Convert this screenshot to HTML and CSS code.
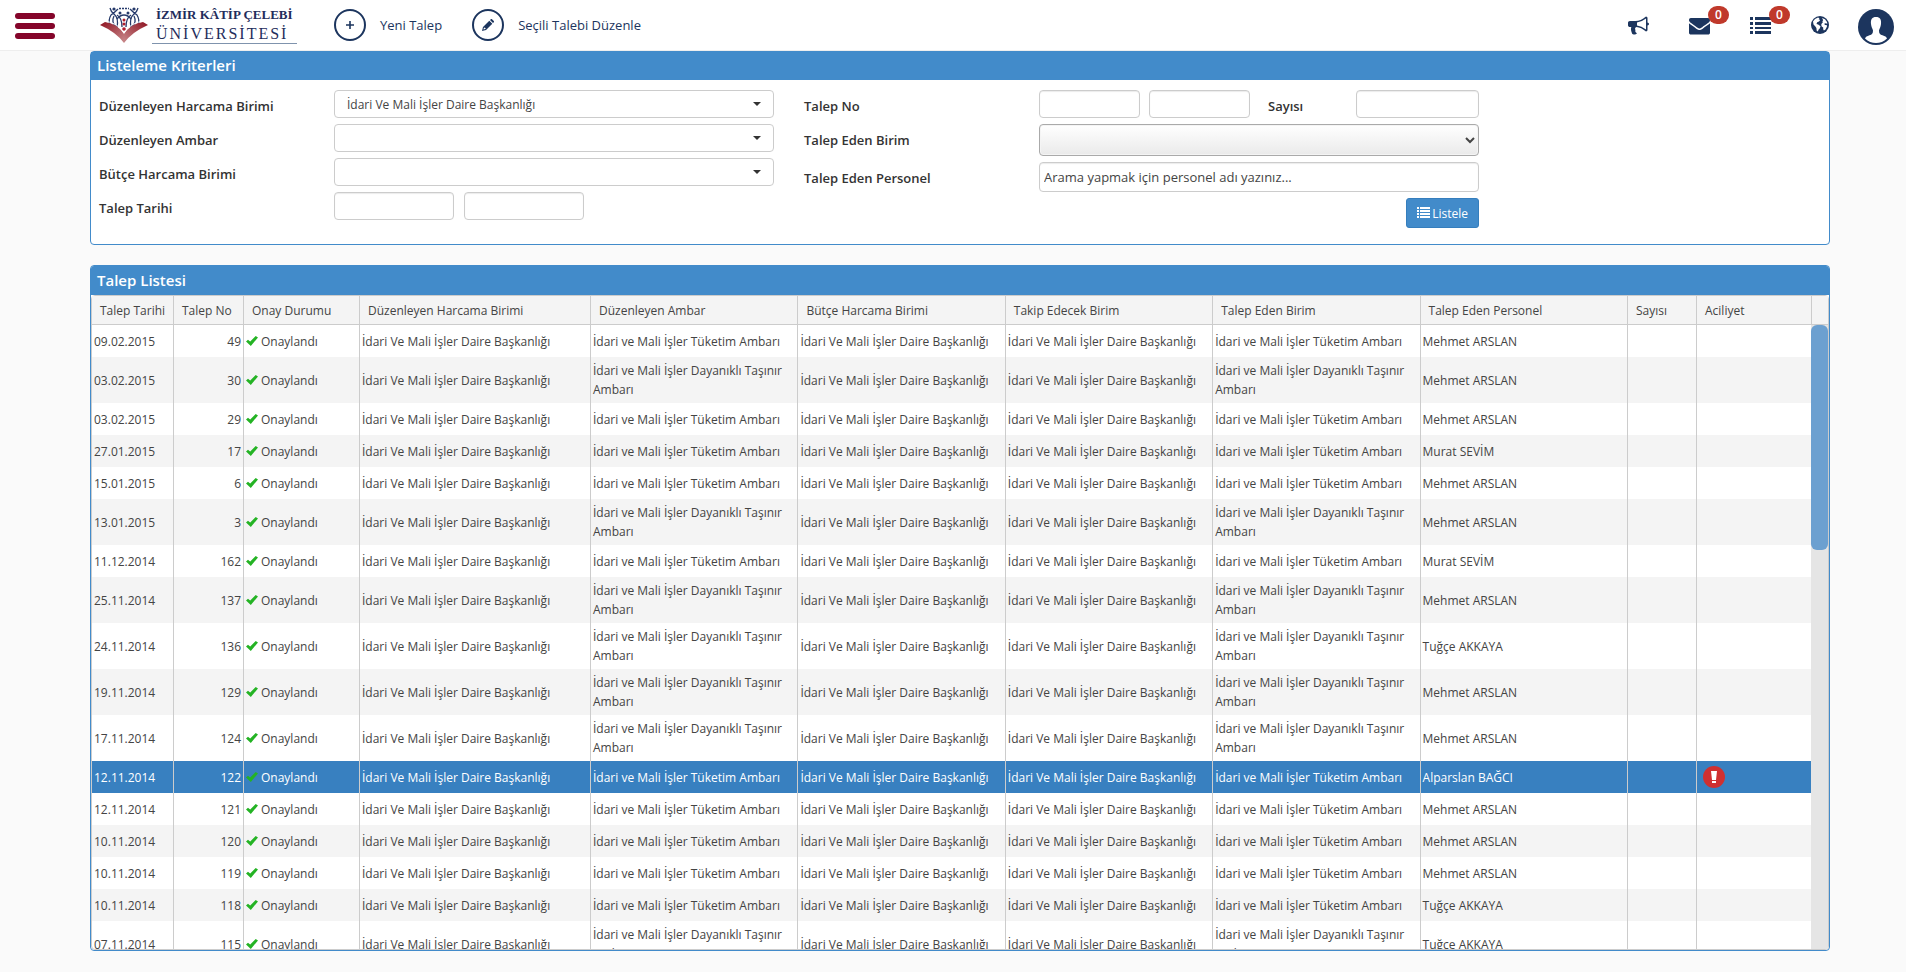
FILE: index.html
```html
<!DOCTYPE html>
<html lang="tr">

<head>
    <meta charset="UTF-8">
    <title>Talep Listesi</title>
    <link rel="stylesheet" href="styles.css">
</head>

<body>
    <header class="topbar">
        <button class="menu-btn" type="button" aria-label="Menü"><span></span><span></span><span></span></button>
        <a class="logo" href="#">
            <svg class="logo-mark" viewBox="0 0 48 38">
                <defs>
                    <linearGradient id="page" x1="0" y1="0" x2="1" y2="1">
                        <stop offset="0" stop-color="#8e1220" />
                        <stop offset="1" stop-color="#c98a8c" />
                    </linearGradient>
                    <linearGradient id="page2" x1="1" y1="0" x2="0" y2="1">
                        <stop offset="0" stop-color="#8e1220" />
                        <stop offset="1" stop-color="#c98a8c" />
                    </linearGradient>
                </defs>
                <g fill="none" stroke="#263a6b" stroke-width="1.3">
                    <path d="M10 2q1 4 4 6q5 4 3 14M18 3q-4 4-7 6q-3 5-1 10M38 2q-1 4-4 6q-5 4-3 14M30 3q4 4 7 6q3 5 1 10" />
                    <path d="M17 9q5 3 5 12M31 9q-5 3-5 12M14 10q-3 6 2 11M34 10q3 6-2 11M17 13q3-4 7-4t7 4" />
                    <path d="M19 2.500h10" stroke-dasharray="2 1" />
                </g>
                <g fill="#263a6b">
                    <circle cx="14" cy="3" r="1.600" />
                    <circle cx="34" cy="3" r="1.600" />
                    <circle cx="20" cy="7" r="1.500" />
                    <circle cx="28" cy="7" r="1.500" />
                </g>
                <g fill="#b01e2d">
                    <circle cx="24" cy="14" r="1.500" />
                    <circle cx="24" cy="18" r="1.500" />
                    <circle cx="24" cy="23" r="1.800" />
                </g>
                <path d="M0 19l5-3q13 2 19 12v9q-8-11-24-18z" fill="url(#page)" />
                <path d="M48 19l-5-3q-13 2-19 12v9q8-11 24-18z" fill="url(#page2)" />
                <path d="M5 15q13 2 19 12q6-10 19-12" fill="none" stroke="#fff" />
            </svg>
            <span class="logo-text">
                <span class="logo-top">İZMİR KÂTİP ÇELEBİ</span>
                <span class="logo-bottom">ÜNİVERSİTESİ</span>
            </span>
        </a>
        <nav class="actions">
            <a href="#"><span class="circle"><svg viewBox="0 0 10 10" width="8" height="8"><path d="M4 0h2v4h4v2H6v4H4V6H0V4h4z" /></svg></span>Yeni Talep</a>
            <a href="#"><span class="circle"><svg viewBox="0 0 12 12" width="12" height="12"><path d="M8 1l3 3 .8-.8q.5-.6 0-1.200L10 .2q-.6-.5-1.200 0zM7.300 1.700l3 3L4 11 0 12l1-4zM2 8.500l-.6 2.100 2-.5.2-1.100-1-.2z" fill-rule="evenodd" /></svg></span>Seçili Talebi Düzenle</a>
        </nav>
        <nav class="tools">
            <a href="#" aria-label="Duyurular"><svg viewBox="0 0 1792 1792" width="21" height="21"><path d="M1664 640q53 0 90.500 37.500t37.500 90.500-37.500 90.500-90.500 37.500v384q0 52-38 90t-90 38q-417-347-812-380-58 19-91 66t-31 100.500 40 92.500q-20 33-23 65.500t6 58 33.500 55 48 50 61.500 50.500q-29 58-111.500 83t-168.500 11.500-132-55.500q-7-23-29.500-87.500t-32-94.500-23-89-15-101 3.500-98.500 22-110.500h-122q-66 0-113-47t-47-113v-192q0-66 47-113t113-47h480q435 0 896-384 52 0 90 38t38 90v384zm-128 604v-954q-394 302-768 343v270q377 42 768 341z" /></svg></a>
            <a href="#" aria-label="Mesajlar"><svg viewBox="0 0 1792 1792" width="21" height="21"><path d="M1792 710v794q0 66-47 113t-113 47h-1472q-66 0-113-47t-47-113v-794q44 49 101 87 362 246 497 345 57 42 92.500 65.500t94.500 48 110 24.500h2q51 0 110-24.500t94.500-48 92.500-65.500q170-123 498-345 57-39 100-87zm0-294q0 79-49 151t-122 123q-376 261-468 325-10 7-42.500 31t-54 38.500-52 32.500-57.500 27-50 9h-2q-23 0-50-9t-57.500-27-52-32.500-54-38.500-42.500-31q-91-64-262-182.500t-205-142.500q-62-42-117-115.500t-55-136.500q0-78 41.500-130t118.500-52h1472q65 0 112.500 47t47.500 113z" /></svg><span class="badge">0</span></a>
            <a href="#" aria-label="Görevler"><svg viewBox="0 0 21 21" width="21" height="21"><path d="M0 2h3v3H0zM5 2h16v3H5zM0 7h3v3H0zM5 7h16v3H5zM0 12h3v2H0zM5 12h16v2H5zM0 16h3v3H0zM5 16h16v3H5z" /></svg><span class="badge">0</span></a>
            <a href="#" aria-label="Dil"><svg viewBox="0 0 18 18" width="18" height="18"><circle cx="9" cy="9" r="9" /><path d="M2 5.500L4 3l3-1.500 1.500.7-.8 1 1.500.8-1.200 1.500-1.800.7L5.500 8l1.700.6 2.300 1.700-.6 2-1.400 1.500-.6 1.700-1.200-.8-.3-2.700L4 10 2.500 8.500z" fill="#fff" /><path d="M11 2l3 1.200L16 6l.3 1.800-1.500-.6-1.600.5.8 1.300h1.700l.3 1.500-1.500 3-1.600 1-.7-1.300v-1.800l-1.500-.9-.5-1.700.8-1.800 1-.8-.7-1 .9-1z" fill="#fff" /></svg></a>
            <a class="avatar" href="#" aria-label="Hesap"><svg viewBox="0 0 36 36" width="36" height="36"><circle cx="18" cy="18" r="18" /><path d="M18 8c4 0 5.500 2.500 5 7-.3 3-1.500 4.500-2 6.500 0 3 1 4 3.500 4.800 2.500.8 4 1.700 4.500 3.200-3 3-7 4.500-11 4.500S10 32.500 7 29.500c.5-1.500 2-2.400 4.500-3.200 2.500-.8 3.500-1.800 3.500-4.800-.5-2-1.700-3.500-2-6.500-.5-4.500 1-7 5-7z" fill="#fff" /></svg></a>
        </nav>
    </header>

    <main class="content">
        <section class="panel">
            <h2 class="panel-title">Listeleme Kriterleri</h2>
            <form class="criteria">
                <div class="criteria-col">
                    <div class="field">
                        <label for="harcamaBirimi">Düzenleyen Harcama Birimi</label>
                        <select id="harcamaBirimi" class="combo">
                            <option>İdari Ve Mali İşler Daire Başkanlığı</option>
                        </select>
                    </div>
                    <div class="field">
                        <label for="ambar">Düzenleyen Ambar</label>
                        <select id="ambar" class="combo"></select>
                    </div>
                    <div class="field">
                        <label for="butceBirimi">Bütçe Harcama Birimi</label>
                        <select id="butceBirimi" class="combo"></select>
                    </div>
                    <div class="field">
                        <label for="tarih1">Talep Tarihi</label>
                        <div class="pair dates">
                            <input type="text" id="tarih1">
                            <input type="text" aria-label="Talep Tarihi bitiş">
                        </div>
                    </div>
                </div>
                <div class="criteria-col">
                    <div class="field">
                        <label for="talepNo1">Talep No</label>
                        <div class="pair numbers">
                            <input type="text" id="talepNo1">
                            <input type="text" aria-label="Talep No bitiş">
                            <label for="sayisi">Sayısı</label>
                            <input type="text" id="sayisi">
                        </div>
                    </div>
                    <div class="field">
                        <label for="edenBirim">Talep Eden Birim</label>
                        <select id="edenBirim" class="native"></select>
                    </div>
                    <div class="field">
                        <label for="personel">Talep Eden Personel</label>
                        <input type="text" id="personel" class="search" placeholder="Arama yapmak için personel adı yazınız...">
                    </div>
                    <button class="list-btn" type="button"><svg viewBox="0 0 13 12" width="13" height="12"><path d="M0 0h2v2H0zM3 0h10v2H3zM0 3h2v2H0zM3 3h10v2H3zM0 6h2v2H0zM3 6h10v2H3zM0 9h2v2H0zM3 9h10v2H3z" /></svg>Listele</button>
                </div>
            </form>
        </section>

        <section class="panel list-panel">
            <h2 class="panel-title">Talep Listesi</h2>
            <div class="grid">
                <div class="grid-view">
                    <table>
                        <colgroup>
                            <col class="c-date">
                            <col class="c-no">
                            <col class="c-status">
                            <col class="c-unit">
                            <col span="5">
                            <col class="c-count">
                            <col class="c-urgent">
                        </colgroup>
                        <thead>
                            <tr>
                                <th>Talep Tarihi</th>
                                <th>Talep No</th>
                                <th>Onay Durumu</th>
                                <th>Düzenleyen Harcama Birimi</th>
                                <th>Düzenleyen Ambar</th>
                                <th>Bütçe Harcama Birimi</th>
                                <th>Takip Edecek Birim</th>
                                <th>Talep Eden Birim</th>
                                <th>Talep Eden Personel</th>
                                <th>Sayısı</th>
                                <th>Aciliyet</th>
                            </tr>
                        </thead>
                        <tbody id="rows"></tbody>
                    </table>
                </div>
                <div class="grid-scroll">
                    <div class="scroll-head"></div>
                    <div class="scroll-track"><div class="scroll-thumb"></div></div>
                </div>
            </div>
        </section>
    </main>

    <script src="app.js"></script>
</body>

</html>
```
FILE: styles.css
```css
* {
    box-sizing: border-box;
}

body {
    margin: 0;
    height: 100vh;
    display: flex;
    flex-direction: column;
    font-family: 'Open Sans', sans-serif;
    font-size: 12px;
    color: #444;
    background-color: #fafafa;
    overflow: hidden;
}

a {
    color: #1c355e;
    text-decoration: none;
}

svg {
    display: block;
    fill: currentColor;
}

/* top bar */
.topbar {
    display: flex;
    align-items: center;
    height: 51px;
    flex-shrink: 0;
    padding: 0 12px 0 15px;
    background-color: #fff;
    border-bottom: 1px solid #eee;
}

.menu-btn {
    display: flex;
    flex-direction: column;
    gap: 4px;
    width: 40px;
    padding: 2px 0 0;
    border: none;
    background: none;
    cursor: pointer;
}

.menu-btn span {
    height: 6px;
    border-radius: 3px;
    background-color: #84052a;
}

.logo {
    display: flex;
    width: 197px;
    margin-left: 45px;
    color: #1f2d5c;
    font-family: 'Liberation Serif', serif;
}

.logo-mark {
    flex-shrink: 0;
    width: 48px;
    height: 38px;
}

.logo-text {
    display: flex;
    flex-direction: column;
    flex: 1;
    margin-left: 4px;
    padding-left: 4px;
    border-bottom: 1px solid #7f93ad;
    white-space: nowrap;
}

.logo-top {
    font-size: 13px;
    font-weight: bold;
    line-height: 18px;
}

.logo-bottom {
    font-size: 16px;
    line-height: 19px;
    letter-spacing: 2px;
}

.actions {
    display: flex;
    gap: 30px;
    margin-left: 37px;
    font-size: 13px;
}

.actions a {
    display: flex;
    align-items: center;
    gap: 14px;
}

.circle {
    display: flex;
    align-items: center;
    justify-content: center;
    width: 32px;
    height: 32px;
    border: 2px solid #1c355e;
    border-radius: 50%;
}

.tools {
    display: flex;
    align-items: center;
    gap: 40px;
    margin-left: auto;
}

.tools a {
    position: relative;
}

.tools .avatar {
    margin-left: -11px;
    padding-top: 4px;
}

.badge {
    position: absolute;
    top: -9px;
    left: 19px;
    width: 21px;
    height: 18px;
    border-radius: 9px;
    background-color: #c0392b;
    color: #fff;
    font-size: 12px;
    font-weight: 600;
    line-height: 18px;
    text-align: center;
}

/* panels */
.content {
    flex: 1;
    min-height: 0;
    display: flex;
    flex-direction: column;
    gap: 20px;
    padding: 0 76px 21px 90px;
}

.panel {
    border: 1px solid #428bca;
    border-radius: 4px;
    background-color: #fff;
}

.panel-title {
    margin: 0;
    padding: 0 6px 1px;
    background-color: #428bca;
    color: #fff;
    font-size: 15px;
    font-weight: 600;
    line-height: 27px;
}

/* criteria form */
.criteria {
    display: flex;
    gap: 30px;
    padding: 10px 8px 16px;
    font-size: 13px;
}

.criteria-col {
    display: flex;
    flex-direction: column;
    gap: 6px;
    width: 675px;
}

.field {
    display: grid;
    grid-template-columns: 235px 1fr;
    align-items: start;
}

.field label {
    padding-top: 7px;
    color: #333;
    font-weight: 600;
    line-height: 18px;
}

input,
select {
    width: 100%;
    height: 28px;
    padding: 0 4px;
    border: 1px solid #ccc;
    border-radius: 4px;
    background-color: #fff;
    color: #444;
    font-family: inherit;
    font-size: 13px;
}

input {
    box-shadow: inset 0 1px 1px rgba(0, 0, 0, 0.08);
}

input::placeholder {
    color: #444;
}

.combo {
    appearance: none;
    padding: 0 12px;
    font-size: 12px;
    background: #fff url("data:image/svg+xml,%3Csvg xmlns='http://www.w3.org/2000/svg' viewBox='0 0 8 4'%3E%3Cpath d='M0 0h8L4 4z' fill='%23333'/%3E%3C/svg%3E") no-repeat right 12px center / 8px 4px;
}

.native {
    height: 32px;
    border-color: #aaa;
    background: linear-gradient(#fff, #eaeaea);
    box-shadow: inset 0 0 0 1px #f4f4f4;
}

.search {
    height: 30px;
}

.pair {
    display: flex;
    align-items: flex-start;
}

.dates {
    gap: 10px;
}

.dates input {
    width: 120px;
}

.numbers {
    gap: 9px;
}

.numbers input {
    width: 101px;
}

.numbers label {
    flex: 1;
    margin-left: 9px;
}

.numbers input:last-child {
    width: 123px;
}

.list-btn {
    display: flex;
    align-items: center;
    gap: 2px;
    align-self: flex-end;
    height: 30px;
    padding: 0 10px;
    border: 1px solid #357ebd;
    border-radius: 3px;
    background-color: #428bca;
    color: #fff;
    font-family: inherit;
    font-size: 12px;
    cursor: pointer;
}

/* request list */
.list-panel {
    flex: 1;
    min-height: 0;
    display: flex;
    flex-direction: column;
    overflow: hidden;
}

.list-panel .panel-title {
    padding-bottom: 0;
    line-height: 29px;
}

.grid {
    flex: 1;
    min-height: 0;
    display: flex;
    border: 1px solid #ccc;
    border-radius: 4px;
}

.grid-view {
    flex: 1;
    overflow: hidden;
}

table {
    width: 100%;
    table-layout: fixed;
    border-collapse: separate;
    border-spacing: 0;
}

.c-date {
    width: 82px;
}

.c-no {
    width: 70px;
}

.c-status {
    width: 116px;
}

.c-unit {
    width: 231px;
}

.c-count {
    width: 69px;
}

.c-urgent {
    width: 114px;
}

th {
    height: 29px;
    padding: 0 0 0 8px;
    border-right: 1px solid #ccc;
    border-bottom: 1px solid #ccc;
    background-color: #f4f4f4;
    font-weight: normal;
    text-align: left;
    white-space: nowrap;
}

td {
    height: 32px;
    padding: 4px 2px;
    border-right: 1px solid #ccc;
    line-height: 19px;
}

th:last-child,
td:last-child {
    border-right: none;
}

tbody tr:nth-child(even) {
    background-color: #f4f4f4;
}

tbody tr.selected {
    background-color: #3880c0;
    color: #fff;
}

.no {
    text-align: right;
}

.status {
    display: flex;
    align-items: center;
    gap: 3px;
}

.status svg {
    color: #24b324;
}

td:last-child svg {
    margin-left: 4px;
}

.grid-scroll {
    display: flex;
    flex-direction: column;
    width: 17px;
}

.scroll-head {
    height: 29px;
    border-left: 1px solid #ccc;
    border-bottom: 1px solid #ccc;
    background-color: #f4f4f4;
}

.scroll-track {
    flex: 1;
    background-color: #e5e5e5;
}

.scroll-thumb {
    height: 36%;
    border-radius: 6px;
    background-color: #6ca0d0;
}
```
FILE: app.js
```javascript
const daire = 'İdari Ve Mali İşler Daire Başkanlığı';
const tuketim = 'İdari ve Mali İşler Tüketim Ambarı';
const dayanikli = 'İdari ve Mali İşler Dayanıklı Taşınır Ambarı';

const requests = [
    ['09.02.2015', 49, tuketim, 'Mehmet ARSLAN'],
    ['03.02.2015', 30, dayanikli, 'Mehmet ARSLAN'],
    ['03.02.2015', 29, tuketim, 'Mehmet ARSLAN'],
    ['27.01.2015', 17, tuketim, 'Murat SEVİM'],
    ['15.01.2015', 6, tuketim, 'Mehmet ARSLAN'],
    ['13.01.2015', 3, dayanikli, 'Mehmet ARSLAN'],
    ['11.12.2014', 162, tuketim, 'Murat SEVİM'],
    ['25.11.2014', 137, dayanikli, 'Mehmet ARSLAN'],
    ['24.11.2014', 136, dayanikli, 'Tuğçe AKKAYA'],
    ['19.11.2014', 129, dayanikli, 'Mehmet ARSLAN'],
    ['17.11.2014', 124, dayanikli, 'Mehmet ARSLAN'],
    ['12.11.2014', 122, tuketim, 'Alparslan BAĞCI', true],
    ['12.11.2014', 121, tuketim, 'Mehmet ARSLAN'],
    ['10.11.2014', 120, tuketim, 'Mehmet ARSLAN'],
    ['10.11.2014', 119, tuketim, 'Mehmet ARSLAN'],
    ['10.11.2014', 118, tuketim, 'Tuğçe AKKAYA'],
    ['07.11.2014', 115, dayanikli, 'Tuğçe AKKAYA']
];

const check = '<svg viewBox="0 0 12 10" width="12" height="10"><path d="M0 5.500l2-1.800 2.200 1.800L9.700 0 12 1.500 4.800 10z"/></svg>';
const urgentIcon = '<svg viewBox="0 0 22 22" width="22" height="22"><circle cx="11" cy="11" r="11" fill="#d03030"/><path d="M8 5h6l-1 9H9zM9 15h4v2H9z" fill="#fff"/></svg>';

document.getElementById('rows').innerHTML = requests.map(([date, no, store, person, urgent]) => `
    <tr${urgent ? ' class="selected"' : ''}>
        <td>${date}</td>
        <td class="no">${no}</td>
        <td><span class="status">${check}Onaylandı</span></td>
        <td>${daire}</td>
        <td>${store}</td>
        <td>${daire}</td>
        <td>${daire}</td>
        <td>${store}</td>
        <td>${person}</td>
        <td></td>
        <td>${urgent ? urgentIcon : ''}</td>
    </tr>`).join('');
```
